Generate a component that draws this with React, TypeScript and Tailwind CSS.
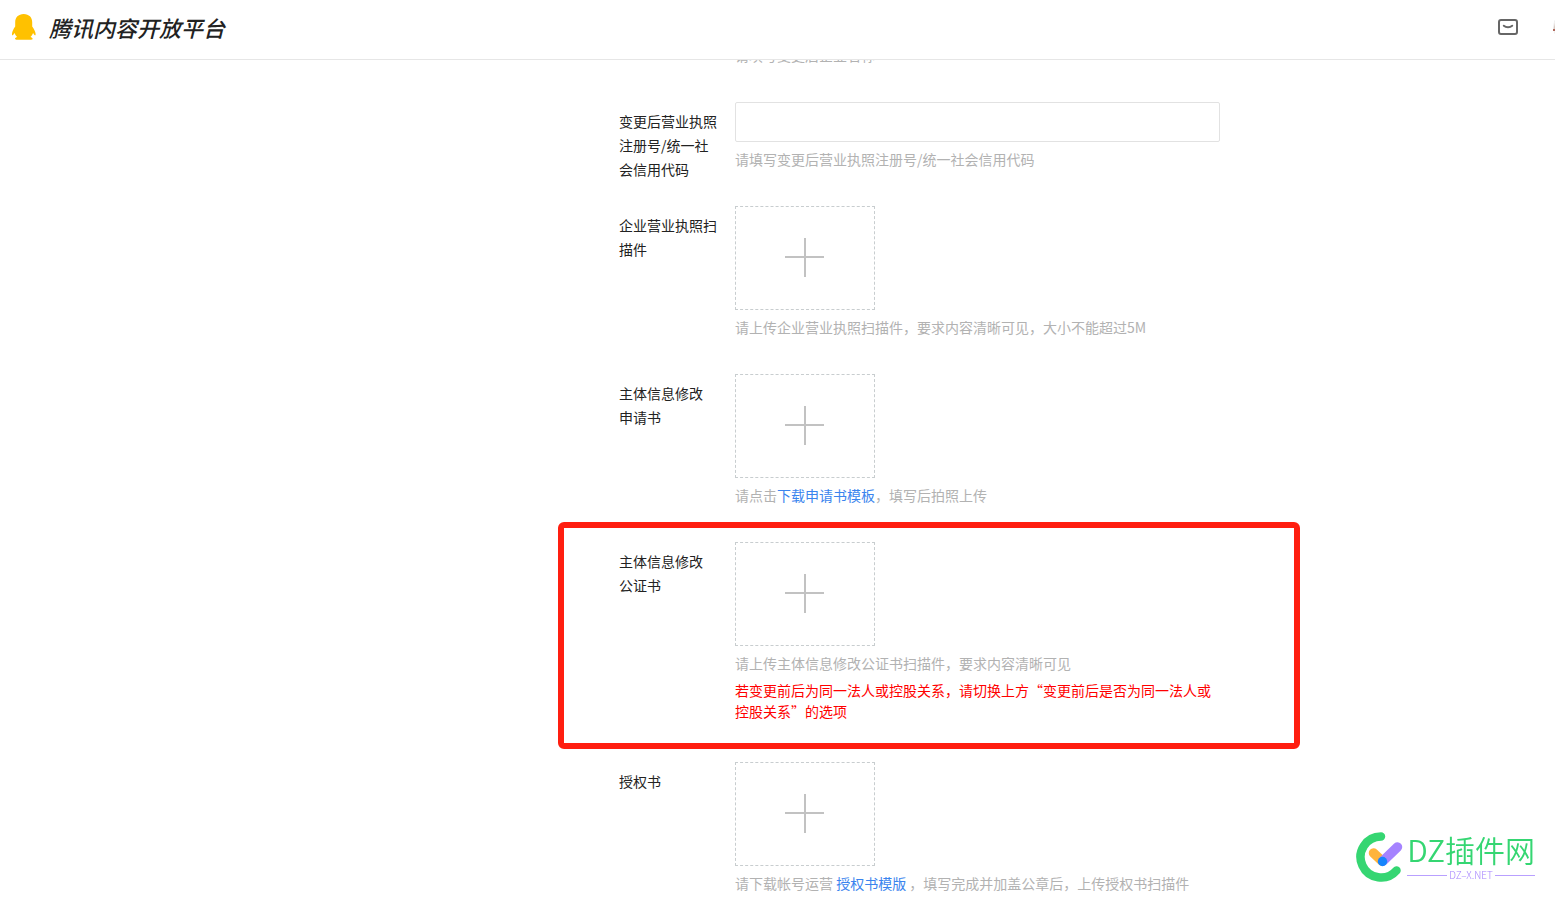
import React, { useId } from "react";

function PenguinLogo() {
  return (
    <svg width="24" height="26" viewBox="0 0 24 26" aria-hidden="true" className="shrink-0">
      <path
        fill="#ffc100"
        d="M11.700 0C6.300 0 3.200 3.600 3.200 8.200v4.300C1.500 15 .2 17.500 0 19.800c-.1 1.500.4 1.900 1.100 1.200.5-.5 1-1.200 1.400-2 .6 1.700 1.500 3 2.600 4.100-1.100.4-1.900.9-2.100 1.600-.1.700.4 1 1.400 1h14.800c1 0 1.500-.3 1.400-1-.2-.7-1-1.200-2.100-1.600 1.100-1.100 2-2.400 2.600-4.100.4.8.9 1.500 1.400 2 .7.700 1.200.3 1.100-1.200-.2-2.300-1.700-4.800-3.400-7.300V8.200C20.200 3.600 17.100 0 11.700 0z"
      />
    </svg>
  );
}

function MailIcon() {
  return (
    <svg width="20" height="16" viewBox="0 0 20 16" fill="none" stroke="#666" strokeWidth="2" aria-hidden="true">
      <rect x="1" y="1" width="18" height="14" rx="2" />
      <path d="M5.800 6.700c2.300 2 6.100 2 8.400 0" strokeLinecap="round" />
    </svg>
  );
}

function AvatarIcon() {
  return (
    <svg width="32" height="32" viewBox="0 0 32 32" aria-hidden="true">
      <circle cx="16" cy="16" r="15.500" fill="#fff" stroke="#eee" />
      <path d="M3 7L.5 18H3z" fill="#d8cac2" />
      <path d="M0 18h4v2H0z" fill="#b0685c" />
    </svg>
  );
}

type RowProps = {
  label: string[];
  children: (id: string) => React.ReactNode;
  highlighted?: boolean;
};

function FormRow({ label, children, highlighted }: RowProps) {
  const id = useId();
  return (
    <div className="relative flex gap-4">
      {highlighted && (
        <div className="pointer-events-none absolute -top-5 -right-20 -bottom-[11px] -left-[61px] rounded-md border-6 border-[#ff1e10]" />
      )}
      <label htmlFor={id} className="w-[100px] shrink-0 pt-[7px] pb-px leading-6 text-[#222]">
        {label.map((line) => (
          <span key={line} className="block">
            {line}
          </span>
        ))}
      </label>
      <div className="min-w-0 flex-1">{children(id)}</div>
    </div>
  );
}

function UploadButton({ id }: { id: string }) {
  return (
    <button id={id} type="button" className="flex h-[104px] w-[140px] items-center justify-center border border-dashed border-[#c8cdcf]">
      <svg width="40" height="40" viewBox="0 0 40 40" aria-hidden="true">
        <path d="M0 19h39M20 0v39" stroke="#c2c2c2" strokeWidth="2" />
      </svg>
    </button>
  );
}

function Hint({ children }: { children: React.ReactNode }) {
  return <p className="pt-[7px] pb-3 leading-[21px] text-[#b2b2b2]">{children}</p>;
}

function DocLink({ children }: { children: React.ReactNode }) {
  return (
    <a href="#template" className="text-[#3a84ee]">
      {children}
    </a>
  );
}

function Watermark() {
  return (
    <div className="pointer-events-none fixed right-5 bottom-[14px] flex items-center gap-1">
      <svg width="48" height="52" viewBox="0 0 48 52" fill="none" strokeLinecap="round" aria-hidden="true">
        <path d="M26 5.500A20.500 20.500 0 1 0 41.500 39.500" stroke="#35d672" strokeWidth="8.500" />
        <path d="M18.500 22L27 30" stroke="#ffb43c" strokeWidth="9.500" />
        <path d="M28 30L42.500 16" stroke="#a583ff" strokeWidth="9.500" />
        <circle cx="27.500" cy="30.500" r="4.700" fill="#1684fc" />
      </svg>
      <div>
        <div className="text-[30px] leading-8 font-[350] text-[#35d672]">DZ插件网</div>
        <div className="flex items-center gap-[2px] pt-1 text-[10px] leading-3 font-light text-[#a583ff]">
          <span className="h-px flex-1 bg-[#b9a0ff]" />
          DZ–X.NET
          <span className="h-px flex-1 bg-[#b9a0ff]" />
        </div>
      </div>
    </div>
  );
}

export default function App() {
  return (
    <div className="flex h-screen flex-col overflow-hidden bg-white font-['Noto_Sans_CJK_SC',sans-serif] text-sm">
      <header className="flex h-[60px] shrink-0 items-center justify-between overflow-hidden border-b border-[#e6e6e6] pb-[5px] pl-3">
        <a href="#home" className="flex items-center gap-[13px]">
          <PenguinLogo />
          <span className="text-[22px] leading-8 font-medium text-[#222] italic">腾讯内容开放平台</span>
        </a>
        <div className="-mr-[30px] flex items-center gap-[35px]">
          <button type="button" aria-label="消息">
            <MailIcon />
          </button>
          <button type="button" aria-label="帐号">
            <AvatarIcon />
          </button>
        </div>
      </header>

      <main className="min-h-0 flex-1 overflow-hidden">
        <form className="-mt-[22px] box-content flex max-w-[601px] flex-col gap-6 pl-[619px]">
          <div className="pl-[116px]">
            <Hint>请填写变更后企业名称</Hint>
          </div>

          <FormRow label={["变更后营业执照", "注册号/统一社", "会信用代码"]}>
            {(id) => (
              <>
                <input id={id} type="text" className="block h-10 w-full rounded-xs border border-[#e2e2e2] px-3 outline-none" />
                <Hint>请填写变更后营业执照注册号/统一社会信用代码</Hint>
              </>
            )}
          </FormRow>

          <FormRow label={["企业营业执照扫", "描件"]}>
            {(id) => (
              <>
                <UploadButton id={id} />
                <Hint>请上传企业营业执照扫描件，要求内容清晰可见，大小不能超过5M</Hint>
              </>
            )}
          </FormRow>

          <FormRow label={["主体信息修改", "申请书"]}>
            {(id) => (
              <>
                <UploadButton id={id} />
                <Hint>
                  请点击<DocLink>下载申请书模板</DocLink>，填写后拍照上传
                </Hint>
              </>
            )}
          </FormRow>

          <FormRow label={["主体信息修改", "公证书"]} highlighted>
            {(id) => (
              <>
                <UploadButton id={id} />
                <Hint>请上传主体信息修改公证书扫描件，要求内容清晰可见</Hint>
                <p className="-mt-1.5 pb-4 leading-[21px] text-[#f00]">
                  若变更前后为同一法人或控股关系，请切换上方“变更前后是否为同一法人或控股关系”的选项
                </p>
              </>
            )}
          </FormRow>

          <FormRow label={["授权书"]}>
            {(id) => (
              <>
                <UploadButton id={id} />
                <Hint>
                  请下载帐号运营 <DocLink>授权书模版</DocLink> ，填写完成并加盖公章后，上传授权书扫描件
                </Hint>
              </>
            )}
          </FormRow>
        </form>
      </main>

      <Watermark />
    </div>
  );
}
